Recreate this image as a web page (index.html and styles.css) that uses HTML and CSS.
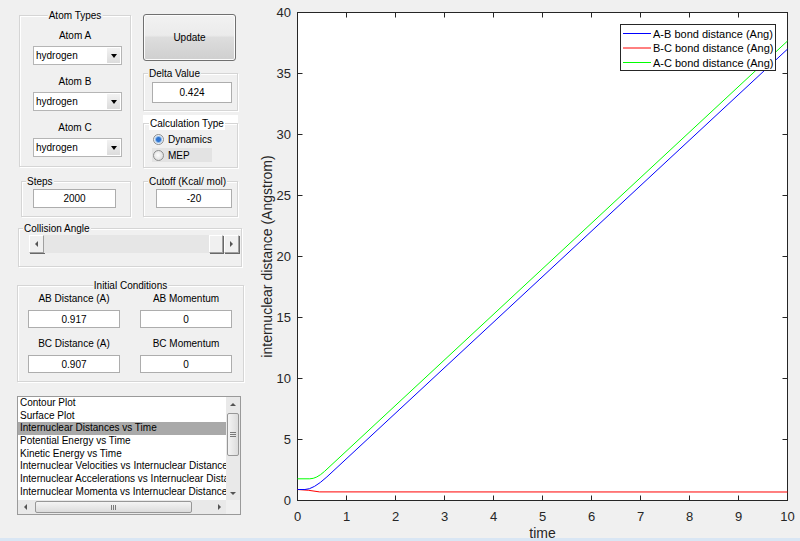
FILE: index.html
```html
<!DOCTYPE html>
<html>
<head>
    <link rel="stylesheet" href="styles.css">
</head>
<body>
<div class="app">
    <div class="controls">
        <div class="top">
            <div class="panel atoms">
                <span class="panel-title centered">Atom Types</span>
                <div class="atom-field">
                    <div class="field-label">Atom A</div>
                    <div class="popup"><span class="popup-text">hydrogen</span><span class="popup-btn"><i class="tri-down"></i></span></div>
                </div>
                <div class="atom-field">
                    <div class="field-label">Atom B</div>
                    <div class="popup"><span class="popup-text">hydrogen</span><span class="popup-btn"><i class="tri-down"></i></span></div>
                </div>
                <div class="atom-field">
                    <div class="field-label">Atom C</div>
                    <div class="popup"><span class="popup-text">hydrogen</span><span class="popup-btn"><i class="tri-down"></i></span></div>
                </div>
            </div>
            <div class="side">
                <div class="update-btn">Update</div>
                <div class="panel delta">
                    <span class="panel-title">Delta Value</span>
                    <div class="edit">0.424</div>
                </div>
                <div class="panel calc">
                    <span class="panel-title white">Calculation Type</span>
                    <div class="radio"><span class="radio-dot on"></span>Dynamics</div>
                    <div class="radio shaded"><span class="radio-dot"></span>MEP</div>
                </div>
            </div>
        </div>

        <div class="row2">
            <div class="panel steps">
                <span class="panel-title">Steps</span>
                <div class="edit">2000</div>
            </div>
            <div class="panel cutoff">
                <span class="panel-title">Cutoff (Kcal/ mol)</span>
                <div class="edit">-20</div>
            </div>
        </div>

        <div class="panel angle">
            <span class="panel-title">Collision Angle</span>
            <div class="slider">
                <span class="slider-btn"><i class="tri-left"></i></span>
                <span class="slider-track"></span>
                <span class="slider-thumb"></span>
                <span class="slider-btn"><i class="tri-right"></i></span>
            </div>
        </div>

        <div class="panel initial">
            <span class="panel-title centered">Initial Conditions</span>
            <div class="init-grid">
                <div class="field-label">AB Distance (A)</div>
                <div class="field-label">AB Momentum</div>
                <div class="edit">0.917</div>
                <div class="edit">0</div>
                <div class="field-label second">BC Distance (A)</div>
                <div class="field-label second">BC Momentum</div>
                <div class="edit">0.907</div>
                <div class="edit">0</div>
            </div>
        </div>

        <div class="listbox">
            <div class="list-items">
                <div class="list-item">Contour Plot</div>
                <div class="list-item">Surface Plot</div>
                <div class="list-item selected">Internuclear Distances vs Time</div>
                <div class="list-item">Potential Energy vs Time</div>
                <div class="list-item">Kinetic Energy vs Time</div>
                <div class="list-item">Internuclear Velocities vs Internuclear Distances</div>
                <div class="list-item">Internuclear Accelerations vs Internuclear Distances</div>
                <div class="list-item">Internuclear Momenta vs Internuclear Distances</div>
            </div>
            <div class="vbar">
                <span class="sb-arrow"><i class="tri-up"></i></span>
                <span class="vbar-track"><span class="vbar-thumb"><i class="grip-h"></i></span></span>
                <span class="sb-arrow"><i class="tri-down small"></i></span>
            </div>
            <div class="hbar">
                <span class="sb-arrow"><i class="tri-left"></i></span>
                <span class="hbar-track"><span class="hbar-thumb"><i class="grip-v"></i></span></span>
                <span class="sb-arrow"><i class="tri-right"></i></span>
            </div>
            <div class="corner"></div>
        </div>
    </div>

    <div class="figure">
        <svg class="plot" width="550" height="538" viewBox="250 0 550 538">
            <rect x="297.5" y="12.5" width="490" height="488" fill="#fff" stroke="#262626"/>
            <!-- ticks -->
            <path stroke="#262626" fill="none" d="
                M346.5 500.5V495.5 M395.5 500.5V495.5 M444.5 500.5V495.5 M493.5 500.5V495.5 M542.5 500.5V495.5
                M591.5 500.5V495.5 M640.5 500.5V495.5 M689.5 500.5V495.5 M738.5 500.5V495.5
                M346.5 12.5V17.5 M395.5 12.5V17.5 M444.5 12.5V17.5 M493.5 12.5V17.5 M542.5 12.5V17.5
                M591.5 12.5V17.5 M640.5 12.5V17.5 M689.5 12.5V17.5 M738.5 12.5V17.5
                M297.5 439.5H302.5 M297.5 378.5H302.5 M297.5 317.5H302.5 M297.5 256.5H302.5
                M297.5 195.5H302.5 M297.5 134.5H302.5 M297.5 73.5H302.5
                M787.5 439.5H782.5 M787.5 378.5H782.5 M787.5 317.5H782.5 M787.5 256.5H782.5
                M787.5 195.5H782.5 M787.5 134.5H782.5 M787.5 73.5H782.5"/>

            <!-- curves -->
            <path class="curve" stroke="#ff0000" d="M297.5 489.5 Q308 489.8 319.5 491.9 L787.5 492"/>
            <path class="curve" stroke="#0000ff" d="M297.5 489.5 L304.9 489.5 Q313.2 489.5 326.9 476.9 L787.5 49.1"/>
            <path class="curve" stroke="#00ff00" d="M297.5 478.8 L309.8 478.8 Q316.5 478.8 324.5 471.4 L787.5 41"/>

            <!-- tick labels -->
            <g class="ylabels">
                <text x="291" y="505">0</text>
                <text x="291" y="444">5</text>
                <text x="291" y="383">10</text>
                <text x="291" y="322">15</text>
                <text x="291" y="261">20</text>
                <text x="291" y="200">25</text>
                <text x="291" y="139">30</text>
                <text x="291" y="78">35</text>
                <text x="291" y="17">40</text>
            </g>
            <g class="xlabels">
                <text x="297.5" y="521">0</text>
                <text x="346.5" y="521">1</text>
                <text x="395.5" y="521">2</text>
                <text x="444.5" y="521">3</text>
                <text x="493.5" y="521">4</text>
                <text x="542.5" y="521">5</text>
                <text x="591.5" y="521">6</text>
                <text x="640.5" y="521">7</text>
                <text x="689.5" y="521">8</text>
                <text x="738.5" y="521">9</text>
                <text x="787.5" y="521">10</text>
            </g>
            <text class="axis-label" x="542.5" y="538">time</text>
            <text class="axis-label" transform="translate(272 256.5) rotate(-90)">internuclear distance (Angstrom)</text>

            <!-- legend -->
            <rect x="620.5" y="24.5" width="155" height="46" fill="#fff" stroke="#262626"/>
            <path stroke="#0000ff" d="M623 33.5H651"/>
            <path stroke="#ff0000" d="M623 48H651"/>
            <path stroke="#00ff00" d="M623 62.5H651"/>
            <g class="legend-text">
                <text x="653" y="37.5">A-B bond distance (Ang)</text>
                <text x="653" y="52">B-C bond distance (Ang)</text>
                <text x="653" y="66.5">A-C bond distance (Ang)</text>
            </g>
        </svg>
    </div>
</div>
</body>
</html>
```

FILE: styles.css
```css
body {
    margin: 0;
    background-color: #f0f0f0;
    font-family: "Liberation Sans", Arial, sans-serif;
    font-size: 10px;
    color: #000;
}

.app {
    display: flex;
    height: 538px;
    border-bottom: 3px solid #d9e6f4;
    overflow: hidden;
}

.controls {
    width: 250px;
    flex: none;
}

/* group boxes */
.panel {
    position: relative;
    box-sizing: border-box;
    border: 1px solid #d5d5d5;
    box-shadow: inset 1px 1px 0 #fff, 1px 1px 0 #fff;
}

.panel-title {
    position: absolute;
    top: -6px;
    left: 4px;
    padding: 0 1px;
    line-height: 12px;
    background-color: #f0f0f0;
    white-space: nowrap;
}

.panel-title.centered {
    left: 50%;
    transform: translateX(-50%);
}

.panel-title.white {
    background-color: #fff;
    left: 5px;
}

.field-label {
    line-height: 12px;
    text-align: center;
}

.edit {
    box-sizing: border-box;
    background-color: #fff;
    border: 1px solid #adadad;
    display: flex;
    align-items: center;
    justify-content: center;
}

/* top block */
.top {
    display: flex;
    padding-left: 19px;
    margin-top: 14px;
}

.atoms {
    width: 112px;
    height: 152px;
    margin-top: 1px;
    padding-top: 14px;
}

.atom-field {
    margin-bottom: 11px;
}

.atom-field .field-label {
    margin-bottom: 4px;
}

.popup {
    box-sizing: border-box;
    display: flex;
    width: 89px;
    height: 19px;
    margin-left: 13px;
    background-color: #fff;
    border: 1px solid #b5b5b5;
}

.popup-text {
    flex: 1;
    padding-left: 2px;
    line-height: 17px;
}

.popup-btn {
    width: 13px;
    margin: 1px;
    background: linear-gradient(#f2f2f2, #dcdcdc);
    display: flex;
    align-items: center;
    justify-content: center;
}

.tri-down {
    border-left: 3.5px solid transparent;
    border-right: 3.5px solid transparent;
    border-top: 4px solid #000;
}

.tri-down.small {
    border-left-width: 3px;
    border-right-width: 3px;
    border-top: 3px solid #555;
}

.tri-up {
    border-left: 3px solid transparent;
    border-right: 3px solid transparent;
    border-bottom: 3px solid #555;
}

.tri-left {
    border-top: 3px solid transparent;
    border-bottom: 3px solid transparent;
    border-right: 3px solid #555;
}

.tri-right {
    border-top: 3px solid transparent;
    border-bottom: 3px solid transparent;
    border-left: 3px solid #555;
}

.side {
    width: 95px;
    margin-left: 12px;
}

.update-btn {
    box-sizing: border-box;
    width: 93px;
    height: 47px;
    border: 1px solid #707070;
    border-radius: 3px;
    background: linear-gradient(#f2f2f2 0%, #ebebeb 45%, #dddddd 50%, #cfcfcf 100%);
    box-shadow: inset 0 0 0 1px #fcfcfc;
    display: flex;
    align-items: center;
    justify-content: center;
}

.delta {
    height: 38px;
    margin-top: 12px;
    padding: 8px 0 0 8px;
}

.delta .edit {
    width: 80px;
    height: 21px;
}

.calc {
    height: 45px;
    margin-top: 12px;
    padding: 8px 0 0 8px;
    box-shadow: inset 1px 1px 0 #fff, 1px 1px 0 #fff, 0 -8px 0 #fff;
}

.radio {
    display: flex;
    align-items: center;
    gap: 4px;
    width: 60px;
    height: 14px;
    margin-bottom: 2px;
}

.radio.shaded {
    background-color: #e3e3e3;
}

.radio-dot {
    box-sizing: border-box;
    width: 11px;
    height: 11px;
    margin-left: 1px;
    border-radius: 50%;
    border: 1px solid #8e8f8f;
    background: radial-gradient(circle at 45% 45%, #fdfdfd, #d3d3d3);
}

.radio-dot.on {
    background: radial-gradient(circle, #2f74d0 0 2px, #7fb0e6 2.8px, #e6eef8 4px);
}

/* steps / cutoff */
.row2 {
    display: flex;
    margin-top: 13px;
    padding-left: 21px;
}

.steps {
    width: 110px;
    height: 36px;
    padding: 7px 0 0 11px;
}

.steps .edit {
    width: 83px;
    height: 19px;
}

.cutoff {
    width: 95px;
    height: 36px;
    margin-left: 12px;
    padding: 7px 0 0 12px;
}

.cutoff .edit {
    width: 76px;
    height: 19px;
}

/* collision angle */
.angle {
    width: 224px;
    height: 39px;
    margin: 11px 0 0 18px;
    padding: 6px 0 0 10px;
}

.slider {
    display: flex;
    width: 210px;
    height: 18px;
}

.slider-track {
    flex: 1;
    background-color: #e6e6e6;
}

.slider-btn,
.slider-thumb {
    box-sizing: border-box;
    width: 15px;
    background-color: #f0f0f0;
    border: 1px solid;
    border-color: #fff #a0a0a0 #a0a0a0 #fff;
    box-shadow: 1px 1px 0 #696969;
    display: flex;
    align-items: center;
    justify-content: center;
}

.slider-thumb {
    width: 14px;
    margin-right: 1px;
}

/* initial conditions */
.initial {
    width: 227px;
    height: 97px;
    margin: 18px 0 0 17px;
    padding: 7px 0 0 10px;
}

.init-grid {
    display: grid;
    grid-template-columns: 92px 92px;
    column-gap: 20px;
}

.init-grid .edit {
    height: 18px;
    margin-top: 5px;
}

.init-grid .field-label.second {
    margin-top: 10px;
}

/* list box */
.listbox {
    box-sizing: border-box;
    display: grid;
    grid-template-columns: 1fr 14px;
    grid-template-rows: 1fr 14px;
    width: 224px;
    height: 119px;
    margin: 14px 0 0 17px;
    background-color: #fff;
    border: 1px solid #9a9a9a;
}

.list-items {
    overflow: hidden;
}

.list-item {
    height: 12.7px;
    line-height: 12.7px;
    padding-left: 2px;
    white-space: nowrap;
}

.list-item.selected {
    background-color: #a9a9a9;
}

.vbar,
.hbar {
    display: flex;
    background-color: #e9e9e9;
}

.vbar {
    flex-direction: column;
}

.sb-arrow {
    flex: none;
    width: 14px;
    height: 14px;
    display: flex;
    align-items: center;
    justify-content: center;
}

.vbar-track {
    flex: 1;
    padding: 2px 1px 0;
}

.vbar-thumb,
.hbar-thumb {
    box-sizing: border-box;
    display: flex;
    align-items: center;
    justify-content: center;
    border: 1px solid #979797;
    border-radius: 2px;
    background: linear-gradient(to right, #f4f4f4, #dcdcdc);
}

.vbar-thumb {
    height: 43px;
}

.hbar-track {
    flex: 1;
    padding: 1px 0 1px 3px;
}

.hbar-thumb {
    width: 157px;
    height: 100%;
    background: linear-gradient(#f4f4f4, #dcdcdc);
}

.grip-h {
    width: 6px;
    height: 5px;
    background: repeating-linear-gradient(#7a7a7a 0 1px, transparent 1px 2px);
}

.grip-v {
    width: 5px;
    height: 5px;
    background: repeating-linear-gradient(to right, #7a7a7a 0 1px, transparent 1px 2px);
}

.corner {
    background-color: #f0f0f0;
}

/* figure */
.figure {
    flex: 1;
}

.plot {
    display: block;
    font-family: "Liberation Sans", Arial, sans-serif;
}

.curve {
    fill: none;
    stroke-width: 1;
}

.ylabels text {
    font-size: 13px;
    fill: #262626;
    text-anchor: end;
}

.xlabels text {
    font-size: 13px;
    fill: #262626;
    text-anchor: middle;
}

.axis-label {
    font-size: 14px;
    fill: #262626;
    text-anchor: middle;
}

.legend-text text {
    font-size: 11px;
    fill: #000;
}
```
